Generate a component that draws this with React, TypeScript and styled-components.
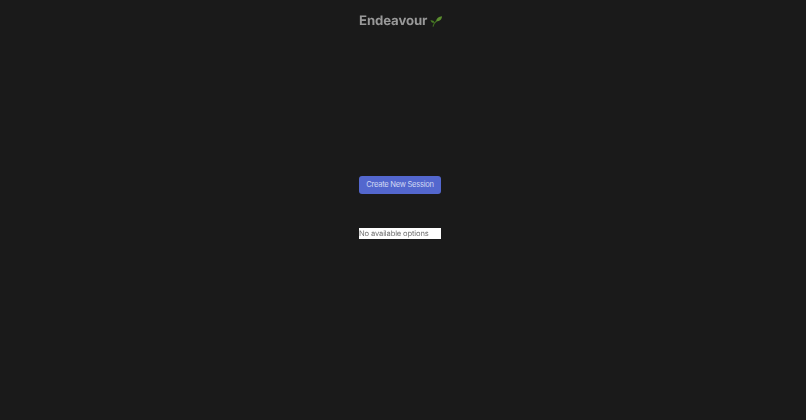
import React from "react";
import styled, { createGlobalStyle } from "styled-components";

const Global = createGlobalStyle`
  html, body { margin: 0; padding: 0; background: #1a1a1a; }
  body { text-rendering: geometricPrecision; }
  #root { min-height: 100vh; }
`;

const Page = styled.main`
  min-height: 420px;
  display: flex;
  flex-direction: column;
  align-items: center;
  padding: 12px 6px 0 0;
  box-sizing: border-box;
  background: #1a1a1a;
`;

const Column = styled.div`
  width: 82px;
  display: flex;
  flex-direction: column;
  opacity: 0.999;
`;

const Title = styled.h1`
  margin: 0;
  height: 18px;
  display: flex;
  align-items: center;
  gap: 3px;
  font: 700 13.2px/18px Inter, sans-serif;
  letter-spacing: -0.1px;
  color: #9a9a9a;
  white-space: nowrap;
`;

const Sprout = styled.svg`
  width: 12px;
  height: 12px;
  flex: none;
`;

const PrimaryButton = styled.button`
  margin-top: 146px;
  height: 18px;
  padding: 0;
  border: none;
  border-radius: 3px;
  background: #5468cf;
  color: #d2d8f5;
  font: 400 7.6px/18px Inter, sans-serif;
  letter-spacing: -0.28px;
  white-space: nowrap;
`;

const EmptySelect = styled.div`
  margin-top: 34px;
  height: 11px;
  background: #ffffff;
  color: #757575;
  font: 400 7.6px/11px Inter, sans-serif;
  letter-spacing: -0.15px;
  white-space: nowrap;
  overflow: hidden;
`;

export default function App() {
  return (
    <Page>
      <Global />
      <Column>
        <Title>
          Endeavour
          <Sprout viewBox="0 0 14 14" aria-hidden="true">
            <path d="M3.5 13.5C4 10.5 5.5 8.6 7.5 7" stroke="#3f6b22" strokeWidth="1.4" fill="none" />
            <path d="M7 7.5C7.5 3.5 10 1.8 14 1.5C14 5 11 7.8 7 7.5Z" fill="#5c8f30" />
            <path d="M5.5 9C4.5 6.8 3 6 0.5 6.2C1.3 8.6 3 9.6 5.5 9Z" fill="#4a7d26" />
          </Sprout>
        </Title>
        <PrimaryButton type="button">Create New Session</PrimaryButton>
        <EmptySelect>No available options</EmptySelect>
      </Column>
    </Page>
  );
}
